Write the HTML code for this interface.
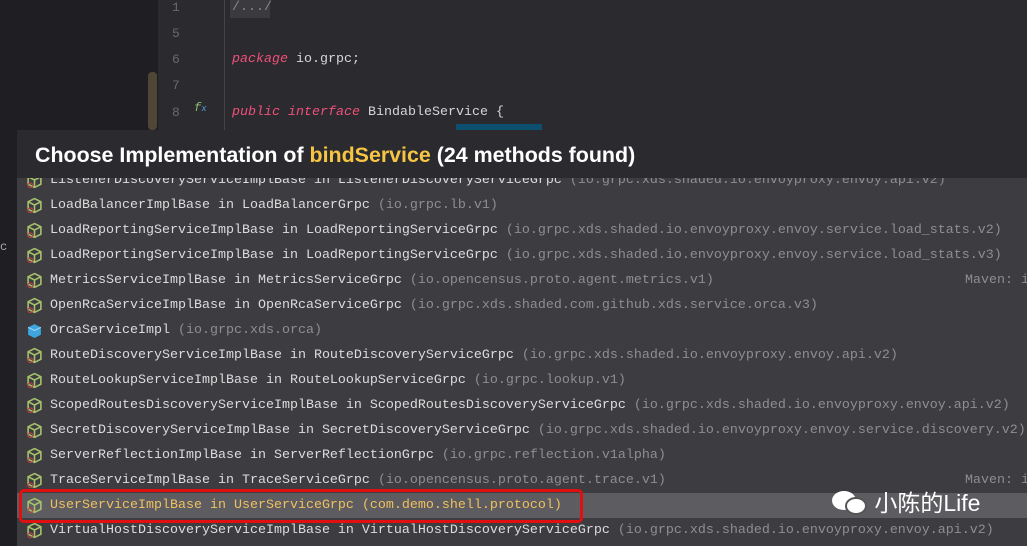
<!DOCTYPE html>
<html><head><meta charset="utf-8"><style>
body{margin:0;width:1027px;height:546px;overflow:hidden;background:#1f1e22;position:relative;font-family:"Liberation Mono",monospace}
.ed{position:absolute;left:158px;top:0;right:0;height:130px;background:#2b2a2e}
.ln{position:absolute;left:172px;color:#6a6a6e;font-size:13px}
.code{position:absolute;left:232px;color:#d6d6d6;font-size:13.33px}
.kw{color:#f0507a;font-style:italic}
.pop{position:absolute;left:17px;top:130px;right:0;bottom:0;background:#3d3c41}
.hd{position:absolute;left:0;top:0;right:0;height:48px;background:#2b2a2e;font-family:"Liberation Sans",sans-serif;font-weight:bold;font-size:21.4px;color:#fff;line-height:50px;padding-left:18px;z-index:2}
.hd b{color:#f6c544}
.row{position:absolute;left:0;right:0;height:25px;line-height:25px;font-size:13.33px;color:#dcdcdc;white-space:nowrap}
.row .p{color:#8e8e92}
.row svg{position:absolute;left:9px;top:4px}
.row span.t{position:absolute;left:33px}
.sel{background:#5d5c61;color:#f0c060}
.sel .p{color:#f0c060}
.mv{position:absolute;left:948px;color:#8e8e92}
</style></head><body>
<div class="ed"></div>
<div style="position:absolute;left:148px;top:72px;width:9px;height:58px;background:#4f4636;border-radius:4px"></div>
<div style="position:absolute;left:224px;top:0;width:1px;height:130px;background:#444"></div>
<div style="position:absolute;left:230px;top:0;width:40px;height:18px;background:#3b3a3f"></div>
<div style="position:absolute;left:456px;top:124px;width:86px;height:6px;background:#0d4f6e"></div>
<div class="ln" style="top:0">1</div><div class="ln" style="top:26px">5</div><div class="ln" style="top:52px">6</div><div class="ln" style="top:78px">7</div><div class="ln" style="top:105px">8</div>
<div style="position:absolute;left:194px;top:101px;color:#8fbf6f;font-size:12px;font-style:italic">f<span style="color:#4fa3e0;font-size:9px">x</span></div>
<div class="code" style="top:0;color:#888">/.../</div>
<div class="code" style="top:52px"><span class="kw">package</span> io.grpc;</div>
<div class="code" style="top:105px"><span class="kw">public interface</span> BindableService {</div>
<div style="position:absolute;left:0;top:240px;color:#aaa;font-size:12px">c</div>
<div class="pop">
<div class="hd">Choose Implementation of <b>bindService</b> (24 methods found)</div>
<div id="list"></div>
</div>
<div style="position:absolute;left:20px;top:491px;width:558px;height:28px;border:3px solid #e01010;border-radius:5px;box-sizing:content-box;margin:-2px 0 0 -1px"></div>
<div style="position:absolute;left:832px;top:484px;font-family:'Liberation Sans','Noto Sans CJK SC',sans-serif;font-size:23px;color:#fff">
<span style="display:inline-block;width:36px;height:26px;vertical-align:-4px;position:relative"><span style="position:absolute;left:0;top:2px;width:24px;height:19px;background:#fff;border-radius:50%"></span><span style="position:absolute;left:13px;top:8px;width:22px;height:18px;background:#fff;border-radius:50%;border:2px solid #555;box-sizing:border-box"></span></span> 小陈的Life</div>
<script>
var rows=[["ListenerDiscoveryServiceImplBase in ListenerDiscoveryServiceGrpc","(io.grpc.xds.shaded.io.envoyproxy.envoy.api.v2)"],
["LoadBalancerImplBase in LoadBalancerGrpc","(io.grpc.lb.v1)"],
["LoadReportingServiceImplBase in LoadReportingServiceGrpc","(io.grpc.xds.shaded.io.envoyproxy.envoy.service.load_stats.v2)"],
["LoadReportingServiceImplBase in LoadReportingServiceGrpc","(io.grpc.xds.shaded.io.envoyproxy.envoy.service.load_stats.v3)"],
["MetricsServiceImplBase in MetricsServiceGrpc","(io.opencensus.proto.agent.metrics.v1)",1],
["OpenRcaServiceImplBase in OpenRcaServiceGrpc","(io.grpc.xds.shaded.com.github.xds.service.orca.v3)"],
["OrcaServiceImpl","(io.grpc.xds.orca)",0,2],
["RouteDiscoveryServiceImplBase in RouteDiscoveryServiceGrpc","(io.grpc.xds.shaded.io.envoyproxy.envoy.api.v2)"],
["RouteLookupServiceImplBase in RouteLookupServiceGrpc","(io.grpc.lookup.v1)"],
["ScopedRoutesDiscoveryServiceImplBase in ScopedRoutesDiscoveryServiceGrpc","(io.grpc.xds.shaded.io.envoyproxy.envoy.api.v2)"],
["SecretDiscoveryServiceImplBase in SecretDiscoveryServiceGrpc","(io.grpc.xds.shaded.io.envoyproxy.envoy.service.discovery.v2)"],
["ServerReflectionImplBase in ServerReflectionGrpc","(io.grpc.reflection.v1alpha)"],
["TraceServiceImplBase in TraceServiceGrpc","(io.opencensus.proto.agent.trace.v1)",1],
["UserServiceImplBase in UserServiceGrpc","(com.demo.shell.protocol)",0,0,1],
["VirtualHostDiscoveryServiceImplBase in VirtualHostDiscoveryServiceGrpc","(io.grpc.xds.shaded.io.envoyproxy.envoy.api.v2)"]];
var h="";
var cube='<svg width="17" height="17" viewBox="0 0 16 16"><path d="M8 1.5L14 4.5V11.5L8 14.5L2 11.5V4.5Z M2 4.5L8 7.5L14 4.5 M8 7.5V14.5" fill="none" stroke="#a5c26a" stroke-width="1.5"/><circle cx="4" cy="12.5" r="2.2" fill="none" stroke="#c0404a" stroke-width="1"/></svg>';
var blue='<svg width="17" height="17" viewBox="0 0 16 16"><path d="M8 2L14 5V12L8 15L2 12V5Z" fill="#3da6e0"/><path d="M2 5L8 8L14 5" fill="none" stroke="#9fd6f5" stroke-width="1"/></svg>';
rows.forEach(function(r,i){
 var top=38+i*25;
 h+='<div class="row'+(r[4]?' sel':'')+'" style="top:'+top+'px">'+(r[3]==2?blue:cube)+'<span class="t">'+r[0]+' <span class="p">'+r[1]+'</span></span>'+(r[2]?'<span class="mv">Maven: i</span>':'')+'</div>';
});
document.getElementById('list').innerHTML=h;
</script>
</body></html>
